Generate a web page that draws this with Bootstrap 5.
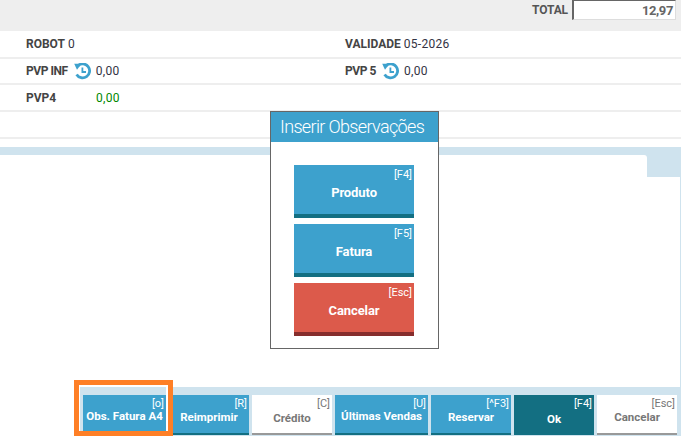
<!DOCTYPE html>
<html lang="pt">
<head>
<meta charset="utf-8">
<link href="https://cdn.jsdelivr.net/npm/bootstrap@5.3.0/dist/css/bootstrap.min.css" rel="stylesheet">
<style>
html,body{height:436px;overflow:hidden}
body{width:681px;position:relative;background:#fff;font-family:Roboto,"Liberation Sans",Arial,sans-serif;font-size:12px;color:#333;line-height:1}
.topbar{height:31px;background:#eee;padding-right:5px}
.total-lbl{font-weight:700;color:#555;font-size:12px;margin-right:4px;margin-top:4px;letter-spacing:-.1px}
.total-box{width:104px;height:20px;background:#fff;border:1px solid #ddd;border-top:1px solid #666;border-left:2px solid #666;text-align:right;font-weight:700;color:#666;font-size:13px;padding:3px 2px 0 0;letter-spacing:-.4px}
.info-row{display:flex;border-bottom:2px solid #eee;align-items:center;padding-left:26px}
.r1{height:28px}.r2{height:26px}.r3{height:27px}.r4{height:27px}
.cell-a{width:319px;display:flex;align-items:center}
.cell-b{display:flex;align-items:center}
.lbl{font-weight:700;color:#444}
.val{color:#334;letter-spacing:.3px}
.lbl-tight{letter-spacing:-.45px}
.lbl-w{width:70px}
.val.green{color:#080}
.hist{margin:0 5px 0 6px;flex:none}
.gap-area{height:8px}
.panel-wrap{height:289px;background:#cfe3ee;padding-top:8px;display:flex;flex-direction:column}
.panel-top{height:22px}
.panel-notch{width:647px;height:22px;background:#fff;border-top-right-radius:3px}
.panel-body{height:210px;background:#fff;margin-right:1px}
.actions{display:flex;height:49px}
.act-left{width:79px;height:49px;background:#fff;flex:none}
.act-row{display:flex;gap:3px;padding:8px 0 0 4px}
.act{position:relative;height:40px;width:80px;border:0;padding:0;font-weight:700;font-size:11.5px;color:#fff;background:#3da1cd;border-bottom:2px solid #136f82;text-align:center;white-space:nowrap;flex:none}
.act .key{position:absolute;top:3px;right:2px;font-weight:400;font-size:11px;line-height:1}
.act.lite{background:#fff;color:#777;border-bottom-color:#999}
.act.dark{background:#136f82}
.a-first{width:83px}
.a-wide{width:93px}
.t-1{display:block;margin-top:5px}
.t-2{display:block;margin-top:7px}
.t-3{display:block;margin-top:9px}
.t-4{display:block;margin-top:11px}
.focus-box{position:absolute;left:74px;top:380px;width:99px;height:56px;border:5px solid #fe7f26;pointer-events:none}
.focus-in{height:100%;border:solid #fff;border-width:2px 2px 0 1px}
.dlg{position:absolute;left:270px;top:111px;width:169px;height:238px;border:1px solid #666;background:#fff}
.dlg-head{height:30px;background:#3da1cd;color:#fff;font-size:18px;font-weight:300;padding-left:9px;line-height:30px;white-space:nowrap;letter-spacing:-.65px}
.dlg-body{display:flex;flex-direction:column;gap:6px;padding:23px 0 0 23px}
.dbtn{position:relative;width:120px;height:53px;border:0;border-bottom:4px solid #136f82;background:#3da1cd;color:#fff;font-weight:700;font-size:13px;padding:5px 0 0;letter-spacing:-.1px}
.dbtn .key{position:absolute;top:4px;right:2px;font-weight:400;font-size:11px;line-height:1;letter-spacing:0}
.dbtn.red{background:#dc5a4b;border-bottom-color:#862d2d}
</style>
</head>
<body>
<div class="topbar d-flex justify-content-end align-items-start">
  <span class="total-lbl">TOTAL</span><div class="total-box">12,97</div>
</div>
<div class="info-row r1"><div class="cell-a"><span class="lbl">ROBOT</span>&nbsp;<span class="val">0</span></div><div class="cell-b"><span class="lbl">VALIDADE</span>&nbsp;<span class="val">05-2026</span></div></div>
<div class="info-row r2"><div class="cell-a"><span class="lbl lbl-tight">PVP INF</span><svg class="hist" width="17" height="17" viewBox="0 0 17 17"><path d="M4 2.6A7 7 0 1 1 2.6 11.5" fill="none" stroke="#3da1cd" stroke-width="2.8"/><path d="M0.2 0.8h7.4L3 6.8z" fill="#3da1cd"/><path d="M8.4 4.6v4.4h3.6" fill="none" stroke="#3da1cd" stroke-width="1.8"/></svg><span class="val">0,00</span></div><div class="cell-b"><span class="lbl lbl-tight">PVP 5</span><svg class="hist" width="17" height="17" viewBox="0 0 17 17"><path d="M4 2.6A7 7 0 1 1 2.6 11.5" fill="none" stroke="#3da1cd" stroke-width="2.8"/><path d="M0.2 0.8h7.4L3 6.8z" fill="#3da1cd"/><path d="M8.4 4.6v4.4h3.6" fill="none" stroke="#3da1cd" stroke-width="1.8"/></svg><span class="val">0,00</span></div></div>
<div class="info-row r3"><div class="cell-a"><span class="lbl lbl-w">PVP4</span><span class="val green">0,00</span></div></div>
<div class="info-row r4"></div>
<div class="gap-area"></div>
<div class="panel-wrap">
  <div class="panel-top"><div class="panel-notch"></div></div>
  <div class="panel-body"></div>
  <div class="actions">
    <div class="act-left"></div>
    <div class="act-row">
    <button class="act a-first"><span class="key">[o]</span><span class="t-1">Obs. Fatura A4</span></button>
    <button class="act"><span class="key">[R]</span><span class="t-2">Reimprimir</span></button>
    <button class="act lite"><span class="key">[C]</span><span class="t-3">Crédito</span></button>
    <button class="act a-wide"><span class="key">[U]</span><span class="t-1">Últimas Vendas</span></button>
    <button class="act"><span class="key">[^F3]</span><span class="t-2">Reservar</span></button>
    <button class="act dark"><span class="key">[F4]</span><span class="t-4">Ok</span></button>
    <button class="act lite"><span class="key">[Esc]</span><span class="t-2">Cancelar</span></button>
    </div>
  </div>
</div>
<div class="focus-box"><div class="focus-in"></div></div>
<div class="dlg">
  <div class="dlg-head">Inserir Observações</div>
  <div class="dlg-body">
    <button class="dbtn"><span class="key">[F4]</span>Produto</button>
    <button class="dbtn"><span class="key">[F5]</span>Fatura</button>
    <button class="dbtn red"><span class="key">[Esc]</span>Cancelar</button>
  </div>
</div>
<script src="https://cdn.jsdelivr.net/npm/bootstrap@5.3.0/dist/js/bootstrap.bundle.min.js"></script>
</body>
</html>
